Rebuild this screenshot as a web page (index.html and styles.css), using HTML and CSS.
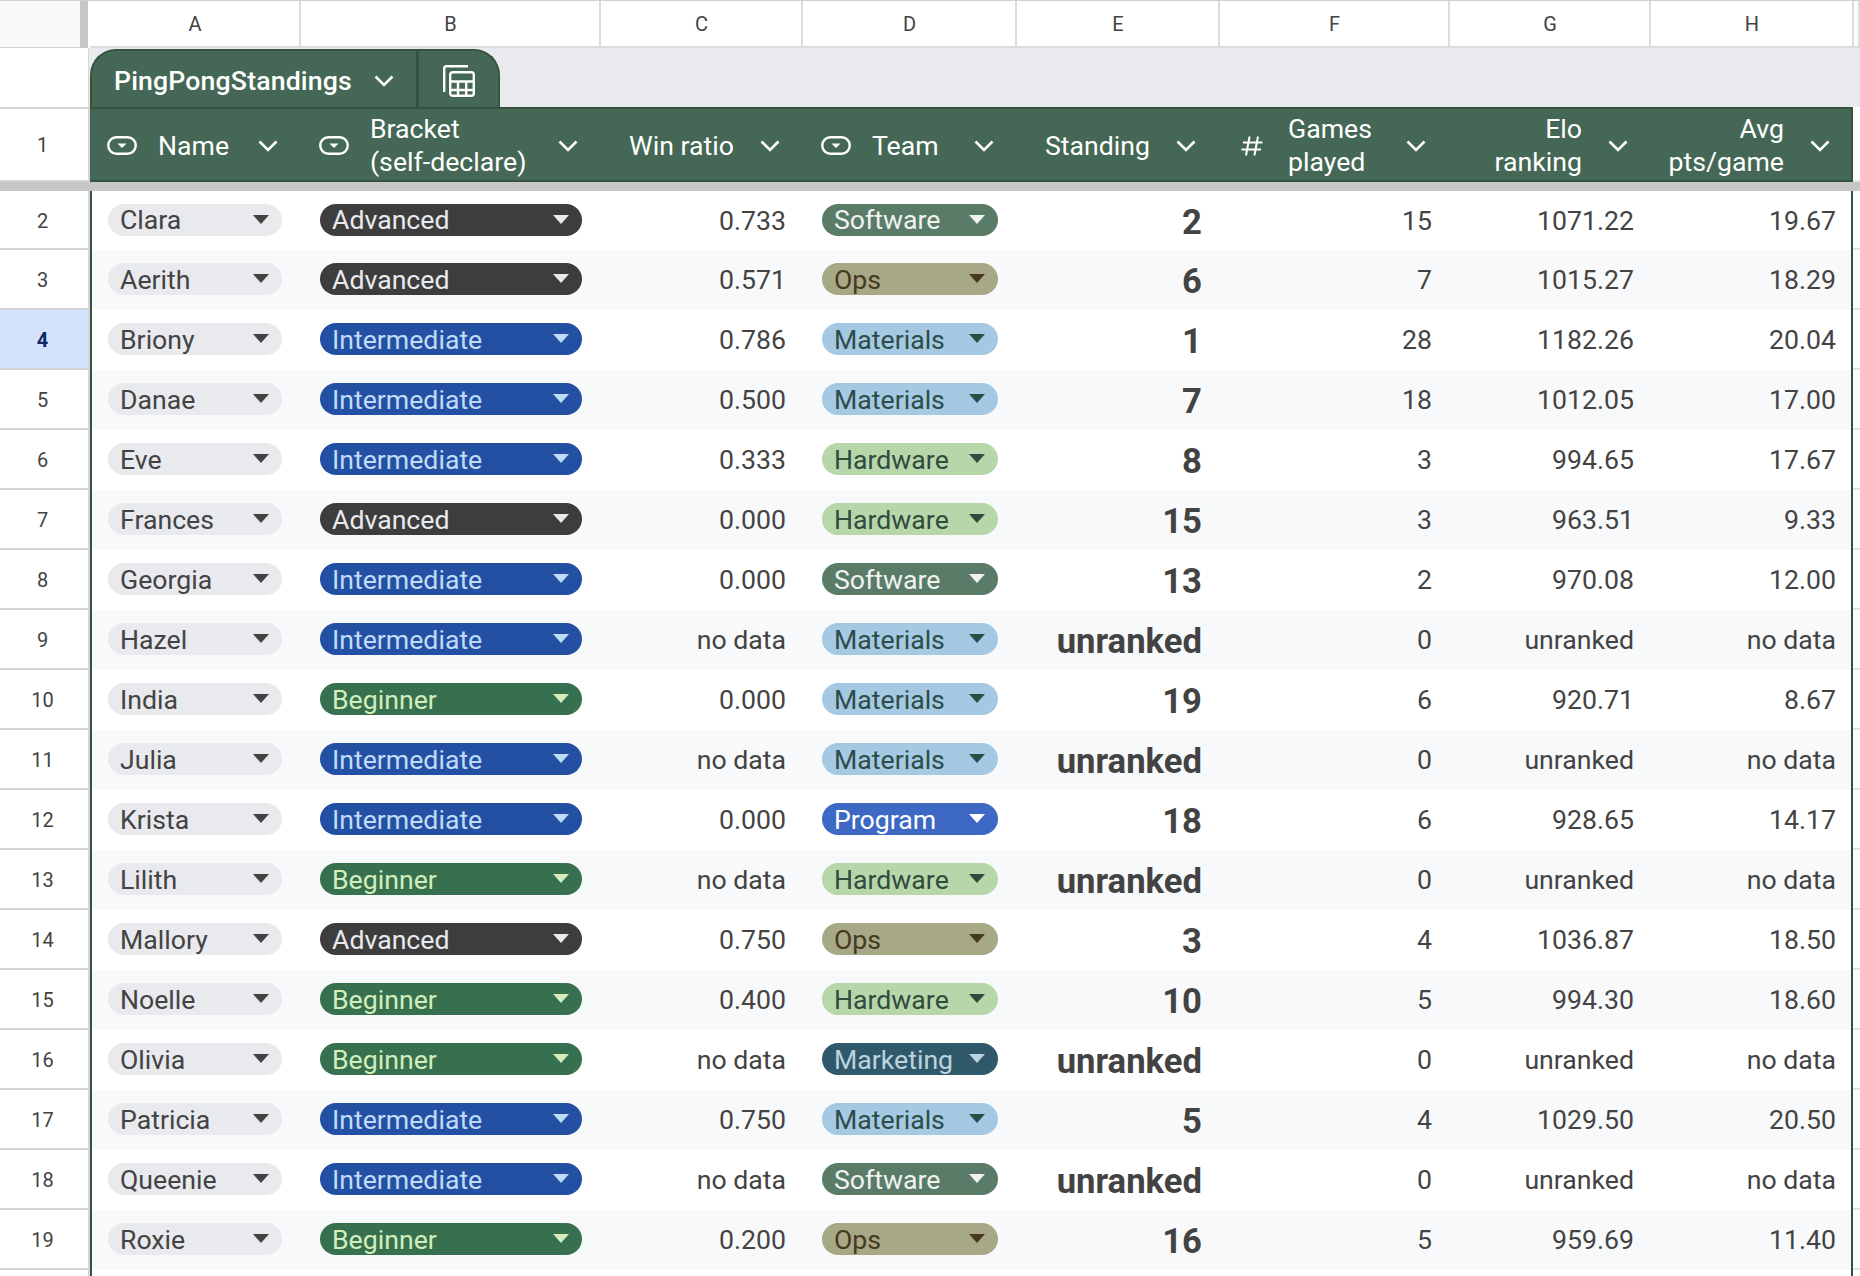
FILE: index.html
```html
<!DOCTYPE html>
<html lang="en">
<head>
    <meta charset="UTF-8">
    <title>PingPongStandings</title>
    <link rel="stylesheet" href="styles.css">
</head>
<body>
    <svg class="defs" width="0" height="0">
        <symbol id="chev" viewBox="0 0 20 12"><path d="M1.5 1.5 10 10l8.5-8.5" fill="none" stroke="currentColor" stroke-width="2.6"/></symbol>
        <symbol id="dropdown" viewBox="0 0 30 19"><rect x="1.3" y="1.3" width="27.4" height="16.4" rx="8" fill="none" stroke="currentColor" stroke-width="2.4"/><path d="M10.5 7.5h9l-4.5 4.6z" fill="currentColor"/></symbol>
    </svg>

    <div class="letters">
        <div class="corner"></div>
        <div class="letter">A</div>
        <div class="letter">B</div>
        <div class="letter">C</div>
        <div class="letter">D</div>
        <div class="letter">E</div>
        <div class="letter">F</div>
        <div class="letter">G</div>
        <div class="letter">H</div>
        <div class="letter"></div>
    </div>

    <div class="tab-row">
        <div class="gutter"></div>
        <div class="tab-strip">
            <div class="tab">
                <div class="tab-name">PingPongStandings<svg class="chev"><use href="#chev"/></svg></div>
                <div class="tab-views">
                    <svg class="calc" viewBox="0 0 32 32" fill="none" stroke="currentColor" stroke-width="2.4">
                        <path d="M25 1.2H3.5a2.3 2.3 0 0 0-2.3 2.3V27"/>
                        <rect x="7.2" y="7.2" width="23.6" height="23.6" rx="2.6"/>
                        <path d="M7 16.5h24M7 25h24M15 16.5V31M23.2 16.5V31"/>
                    </svg>
                </div>
            </div>
        </div>
    </div>

    <div class="head-row">
        <div class="gutter">1</div>
        <div class="head head-a"><svg class="dd"><use href="#dropdown"/></svg><span class="label">Name</span><svg class="chev"><use href="#chev"/></svg></div>
        <div class="head"><svg class="dd"><use href="#dropdown"/></svg><span class="label">Bracket<br>(self-declare)</span><svg class="chev"><use href="#chev"/></svg></div>
        <div class="head head-c"><span class="label">Win ratio</span><svg class="chev"><use href="#chev"/></svg></div>
        <div class="head"><svg class="dd"><use href="#dropdown"/></svg><span class="label">Team</span><svg class="chev"><use href="#chev"/></svg></div>
        <div class="head head-right head-e"><span class="label">Standing</span><svg class="chev"><use href="#chev"/></svg></div>
        <div class="head head-f">
            <svg class="hash" viewBox="0 0 22 20" fill="none" stroke="currentColor" stroke-width="2"><path d="M8.6 0.5 5 19.5M17 0.5 13.4 19.5M2 6.5h19.5M0.5 13.5H20"/></svg>
            <span class="label">Games<br>played</span><svg class="chev"><use href="#chev"/></svg>
        </div>
        <div class="head head-right"><span class="label">Elo<br>ranking</span><svg class="chev"><use href="#chev"/></svg></div>
        <div class="head head-right head-h"><span class="label">Avg<br>pts/game</span><svg class="chev"><use href="#chev"/></svg></div>
        <div class="spare"></div>
    </div>

    <div class="freeze"></div>

    <div class="rows">
        <div class="row">
            <div class="gutter">2</div>
            <div class="cell cell-a"><span class="chip chip-name">Clara<i class="caret"></i></span></div>
            <div class="cell"><span class="chip chip-bracket advanced">Advanced<i class="caret"></i></span></div>
            <div class="cell num">0.733</div>
            <div class="cell"><span class="chip chip-team software">Software<i class="caret"></i></span></div>
            <div class="cell num rank">2</div>
            <div class="cell num">15</div>
            <div class="cell num">1071.22</div>
            <div class="cell num cell-h">19.67</div>
            <div class="spare"></div>
        </div>
        <div class="row">
            <div class="gutter">3</div>
            <div class="cell cell-a"><span class="chip chip-name">Aerith<i class="caret"></i></span></div>
            <div class="cell"><span class="chip chip-bracket advanced">Advanced<i class="caret"></i></span></div>
            <div class="cell num">0.571</div>
            <div class="cell"><span class="chip chip-team ops">Ops<i class="caret"></i></span></div>
            <div class="cell num rank">6</div>
            <div class="cell num">7</div>
            <div class="cell num">1015.27</div>
            <div class="cell num cell-h">18.29</div>
            <div class="spare"></div>
        </div>
        <div class="row">
            <div class="gutter gutter-active">4</div>
            <div class="cell cell-a"><span class="chip chip-name">Briony<i class="caret"></i></span></div>
            <div class="cell"><span class="chip chip-bracket intermediate">Intermediate<i class="caret"></i></span></div>
            <div class="cell num">0.786</div>
            <div class="cell"><span class="chip chip-team materials">Materials<i class="caret"></i></span></div>
            <div class="cell num rank">1</div>
            <div class="cell num">28</div>
            <div class="cell num">1182.26</div>
            <div class="cell num cell-h">20.04</div>
            <div class="spare"></div>
        </div>
        <div class="row">
            <div class="gutter">5</div>
            <div class="cell cell-a"><span class="chip chip-name">Danae<i class="caret"></i></span></div>
            <div class="cell"><span class="chip chip-bracket intermediate">Intermediate<i class="caret"></i></span></div>
            <div class="cell num">0.500</div>
            <div class="cell"><span class="chip chip-team materials">Materials<i class="caret"></i></span></div>
            <div class="cell num rank">7</div>
            <div class="cell num">18</div>
            <div class="cell num">1012.05</div>
            <div class="cell num cell-h">17.00</div>
            <div class="spare"></div>
        </div>
        <div class="row">
            <div class="gutter">6</div>
            <div class="cell cell-a"><span class="chip chip-name">Eve<i class="caret"></i></span></div>
            <div class="cell"><span class="chip chip-bracket intermediate">Intermediate<i class="caret"></i></span></div>
            <div class="cell num">0.333</div>
            <div class="cell"><span class="chip chip-team hardware">Hardware<i class="caret"></i></span></div>
            <div class="cell num rank">8</div>
            <div class="cell num">3</div>
            <div class="cell num">994.65</div>
            <div class="cell num cell-h">17.67</div>
            <div class="spare"></div>
        </div>
        <div class="row">
            <div class="gutter">7</div>
            <div class="cell cell-a"><span class="chip chip-name">Frances<i class="caret"></i></span></div>
            <div class="cell"><span class="chip chip-bracket advanced">Advanced<i class="caret"></i></span></div>
            <div class="cell num">0.000</div>
            <div class="cell"><span class="chip chip-team hardware">Hardware<i class="caret"></i></span></div>
            <div class="cell num rank">15</div>
            <div class="cell num">3</div>
            <div class="cell num">963.51</div>
            <div class="cell num cell-h">9.33</div>
            <div class="spare"></div>
        </div>
        <div class="row">
            <div class="gutter">8</div>
            <div class="cell cell-a"><span class="chip chip-name">Georgia<i class="caret"></i></span></div>
            <div class="cell"><span class="chip chip-bracket intermediate">Intermediate<i class="caret"></i></span></div>
            <div class="cell num">0.000</div>
            <div class="cell"><span class="chip chip-team software">Software<i class="caret"></i></span></div>
            <div class="cell num rank">13</div>
            <div class="cell num">2</div>
            <div class="cell num">970.08</div>
            <div class="cell num cell-h">12.00</div>
            <div class="spare"></div>
        </div>
        <div class="row">
            <div class="gutter">9</div>
            <div class="cell cell-a"><span class="chip chip-name">Hazel<i class="caret"></i></span></div>
            <div class="cell"><span class="chip chip-bracket intermediate">Intermediate<i class="caret"></i></span></div>
            <div class="cell num">no data</div>
            <div class="cell"><span class="chip chip-team materials">Materials<i class="caret"></i></span></div>
            <div class="cell num rank">unranked</div>
            <div class="cell num">0</div>
            <div class="cell num">unranked</div>
            <div class="cell num cell-h">no data</div>
            <div class="spare"></div>
        </div>
        <div class="row">
            <div class="gutter">10</div>
            <div class="cell cell-a"><span class="chip chip-name">India<i class="caret"></i></span></div>
            <div class="cell"><span class="chip chip-bracket beginner">Beginner<i class="caret"></i></span></div>
            <div class="cell num">0.000</div>
            <div class="cell"><span class="chip chip-team materials">Materials<i class="caret"></i></span></div>
            <div class="cell num rank">19</div>
            <div class="cell num">6</div>
            <div class="cell num">920.71</div>
            <div class="cell num cell-h">8.67</div>
            <div class="spare"></div>
        </div>
        <div class="row">
            <div class="gutter">11</div>
            <div class="cell cell-a"><span class="chip chip-name">Julia<i class="caret"></i></span></div>
            <div class="cell"><span class="chip chip-bracket intermediate">Intermediate<i class="caret"></i></span></div>
            <div class="cell num">no data</div>
            <div class="cell"><span class="chip chip-team materials">Materials<i class="caret"></i></span></div>
            <div class="cell num rank">unranked</div>
            <div class="cell num">0</div>
            <div class="cell num">unranked</div>
            <div class="cell num cell-h">no data</div>
            <div class="spare"></div>
        </div>
        <div class="row">
            <div class="gutter">12</div>
            <div class="cell cell-a"><span class="chip chip-name">Krista<i class="caret"></i></span></div>
            <div class="cell"><span class="chip chip-bracket intermediate">Intermediate<i class="caret"></i></span></div>
            <div class="cell num">0.000</div>
            <div class="cell"><span class="chip chip-team program">Program<i class="caret"></i></span></div>
            <div class="cell num rank">18</div>
            <div class="cell num">6</div>
            <div class="cell num">928.65</div>
            <div class="cell num cell-h">14.17</div>
            <div class="spare"></div>
        </div>
        <div class="row">
            <div class="gutter">13</div>
            <div class="cell cell-a"><span class="chip chip-name">Lilith<i class="caret"></i></span></div>
            <div class="cell"><span class="chip chip-bracket beginner">Beginner<i class="caret"></i></span></div>
            <div class="cell num">no data</div>
            <div class="cell"><span class="chip chip-team hardware">Hardware<i class="caret"></i></span></div>
            <div class="cell num rank">unranked</div>
            <div class="cell num">0</div>
            <div class="cell num">unranked</div>
            <div class="cell num cell-h">no data</div>
            <div class="spare"></div>
        </div>
        <div class="row">
            <div class="gutter">14</div>
            <div class="cell cell-a"><span class="chip chip-name">Mallory<i class="caret"></i></span></div>
            <div class="cell"><span class="chip chip-bracket advanced">Advanced<i class="caret"></i></span></div>
            <div class="cell num">0.750</div>
            <div class="cell"><span class="chip chip-team ops">Ops<i class="caret"></i></span></div>
            <div class="cell num rank">3</div>
            <div class="cell num">4</div>
            <div class="cell num">1036.87</div>
            <div class="cell num cell-h">18.50</div>
            <div class="spare"></div>
        </div>
        <div class="row">
            <div class="gutter">15</div>
            <div class="cell cell-a"><span class="chip chip-name">Noelle<i class="caret"></i></span></div>
            <div class="cell"><span class="chip chip-bracket beginner">Beginner<i class="caret"></i></span></div>
            <div class="cell num">0.400</div>
            <div class="cell"><span class="chip chip-team hardware">Hardware<i class="caret"></i></span></div>
            <div class="cell num rank">10</div>
            <div class="cell num">5</div>
            <div class="cell num">994.30</div>
            <div class="cell num cell-h">18.60</div>
            <div class="spare"></div>
        </div>
        <div class="row">
            <div class="gutter">16</div>
            <div class="cell cell-a"><span class="chip chip-name">Olivia<i class="caret"></i></span></div>
            <div class="cell"><span class="chip chip-bracket beginner">Beginner<i class="caret"></i></span></div>
            <div class="cell num">no data</div>
            <div class="cell"><span class="chip chip-team marketing">Marketing<i class="caret"></i></span></div>
            <div class="cell num rank">unranked</div>
            <div class="cell num">0</div>
            <div class="cell num">unranked</div>
            <div class="cell num cell-h">no data</div>
            <div class="spare"></div>
        </div>
        <div class="row">
            <div class="gutter">17</div>
            <div class="cell cell-a"><span class="chip chip-name">Patricia<i class="caret"></i></span></div>
            <div class="cell"><span class="chip chip-bracket intermediate">Intermediate<i class="caret"></i></span></div>
            <div class="cell num">0.750</div>
            <div class="cell"><span class="chip chip-team materials">Materials<i class="caret"></i></span></div>
            <div class="cell num rank">5</div>
            <div class="cell num">4</div>
            <div class="cell num">1029.50</div>
            <div class="cell num cell-h">20.50</div>
            <div class="spare"></div>
        </div>
        <div class="row">
            <div class="gutter">18</div>
            <div class="cell cell-a"><span class="chip chip-name">Queenie<i class="caret"></i></span></div>
            <div class="cell"><span class="chip chip-bracket intermediate">Intermediate<i class="caret"></i></span></div>
            <div class="cell num">no data</div>
            <div class="cell"><span class="chip chip-team software">Software<i class="caret"></i></span></div>
            <div class="cell num rank">unranked</div>
            <div class="cell num">0</div>
            <div class="cell num">unranked</div>
            <div class="cell num cell-h">no data</div>
            <div class="spare"></div>
        </div>
        <div class="row">
            <div class="gutter">19</div>
            <div class="cell cell-a"><span class="chip chip-name">Roxie<i class="caret"></i></span></div>
            <div class="cell"><span class="chip chip-bracket beginner">Beginner<i class="caret"></i></span></div>
            <div class="cell num">0.200</div>
            <div class="cell"><span class="chip chip-team ops">Ops<i class="caret"></i></span></div>
            <div class="cell num rank">16</div>
            <div class="cell num">5</div>
            <div class="cell num">959.69</div>
            <div class="cell num cell-h">11.40</div>
            <div class="spare"></div>
        </div>
        <div class="row">
            <div class="gutter"></div>
            <div class="cell cell-a"></div>
            <div class="cell"></div>
            <div class="cell"></div>
            <div class="cell"></div>
            <div class="cell"></div>
            <div class="cell"></div>
            <div class="cell"></div>
            <div class="cell cell-h"></div>
            <div class="spare"></div>
        </div>
    </div>
</body>
</html>
```

FILE: styles.css
```css
html, body {
    margin: 0;
    padding: 0;
    height: 1276px;
    overflow: hidden;
}
body {
    font-family: Roboto, "Liberation Sans", sans-serif;
    font-size: 26.67px;
    color: #434343;
    background-color: white;
}
.defs {
    display: block;
    height: 0;
}
.head-row, .row {
    display: grid;
    grid-template-columns: 90px 210px 300px 202px 214px 203px 230px 201px 203px 7px;
}

/* column letters */
.letters {
    display: grid;
    grid-template-columns: 90px 211px 300px 202px 214px 203px 230px 201px 203px 6px;
    height: 48px;
    border-top: 1px solid #d0d0d0;
    box-sizing: border-box;
}
.corner {
    background-color: #f8f9fa;
    border-right: 8px solid #c7c7c7;
    margin-right: 2px;
    border-bottom: 1px solid #d0d0d0;
}
.letter {
    display: flex;
    align-items: center;
    justify-content: center;
    box-sizing: border-box;
    padding-left: 1px;
    font-size: 20px;
    border-right: 2px solid #dcdcdc;
    border-bottom: 2px solid #dcdcdc;
}

/* row numbers */
.gutter {
    display: flex;
    align-items: center;
    justify-content: center;
    box-sizing: border-box;
    font-size: 20px;
    padding-top: 2px;
    padding-right: 3px;
    background-color: white;
    border-right: 2px solid #d4d4d4;
    border-bottom: 2px solid #d4d4d4;
}
.gutter-active {
    background-color: #d3e3fd;
    color: #0b2a66;
    font-weight: bold;
}
.tab-row .gutter {
    border-bottom: 0;
}
.head-row .gutter {
    padding-top: 0;
    border-top: 2px solid #d4d4d4;
}

/* table tab */
.tab-row {
    display: grid;
    grid-template-columns: 90px 1fr;
    height: 59px;
}
.tab-strip {
    display: flex;
    align-items: flex-end;
    background-color: #e8eaed;
    margin-left: -1px;
    padding-left: 1px;
}
.tab {
    display: flex;
    width: 410px;
    height: 58px;
    box-sizing: border-box;
    background-color: #446855;
    color: white;
    border-top: 2px solid #36533f;
    border-left: 2px solid #36533f;
    border-right: 2px solid #36533f;
    border-radius: 26px 26px 0 0;
}
.tab-name {
    display: flex;
    align-items: center;
    width: 327px;
    box-sizing: border-box;
    padding-top: 4px;
    padding-left: 22px;
    padding-right: 22px;
    font-weight: 500;
    letter-spacing: 0.15px;
    border-right: 3px solid #36533f;
    white-space: nowrap;
}
.tab-name .chev {
    margin-left: auto;
}
.tab-views {
    flex: 1;
    display: flex;
    align-items: center;
    padding-top: 4px;
    padding-left: 24px;
}
.calc {
    width: 32px;
    height: 32px;
}

/* header row */
.head-row {
    height: 75px;
}
.head {
    display: flex;
    align-items: center;
    box-sizing: border-box;
    padding-left: 20px;
    padding-right: 22px;
    padding-top: 3px;
    background-color: #446855;
    color: white;
    line-height: 33px;
    border-top: 2px solid #36533f;
    border-bottom: 2px solid #36533f;
}
.head-a {
    padding-left: 18px;
}
.head-c {
    padding-left: 29px;
}
.head-right {
    justify-content: flex-end;
    text-align: right;
}
.head-e {
    padding-right: 23px;
}
.head-f {
    padding-left: 22px;
    padding-right: 23px;
}
.head-h {
    padding-right: 21px;
    border-right: 2px solid #36533f;
}
.dd {
    width: 30px;
    height: 19px;
    flex-shrink: 0;
    margin-left: -1px;
    margin-right: 21px;
    margin-bottom: 2px;
}
.hash {
    width: 22px;
    height: 20px;
    flex-shrink: 0;
    margin-right: 25px;
}
.chev {
    width: 20px;
    height: 12px;
    flex-shrink: 0;
    color: white;
}
.head .chev {
    margin-left: auto;
}
.head-right .chev {
    margin-left: 26px;
}

/* frozen row divider */
.freeze {
    height: 9px;
    background-color: #c7c7c7;
}

/* data rows */
.row {
    height: 60px;
}
.row:first-child {
    height: 59px;
}
.row:nth-child(even) .cell {
    background-color: #f8f9fa;
}
.cell {
    display: flex;
    align-items: center;
    box-sizing: border-box;
    padding-left: 20px;
    padding-bottom: 2px;
    white-space: nowrap;
}
.cell-a {
    padding-left: 16px;
    border-left: 2px solid #36533f;
}
.cell-h {
    border-right: 2px solid #36533f;
}
.num {
    justify-content: flex-end;
    padding-right: 16px;
    padding-bottom: 0;
}
.cell-h.num {
    padding-right: 15px;
}
.row .cell:nth-child(7) {
    padding-right: 17px;
}
.rank {
    padding-top: 2px;
    padding-right: 17px;
    font-size: 34.67px;
    font-weight: bold;
}
.spare {
    border-bottom: 2px solid #e4e4e4;
}

/* dropdown chips */
.chip {
    display: flex;
    align-items: center;
    justify-content: space-between;
    box-sizing: border-box;
    height: 32px;
    padding-top: 1px;
    padding-left: 12px;
    padding-right: 13px;
    border-radius: 16px;
    line-height: 32px;
}
.caret {
    width: 0;
    height: 0;
    border-left: 8.5px solid transparent;
    border-right: 8.5px solid transparent;
    border-top: 9px solid currentColor;
    margin-bottom: 2px;
}
.chip-name {
    width: 174px;
    background-color: #e8eaed;
}
.chip-bracket {
    width: 262px;
}
.chip-team {
    width: 176px;
}
.advanced {
    background-color: #3d3d3d;
    color: #e8eaed;
}
.intermediate {
    background-color: #2450a3;
    color: #bfdcf6;
}
.beginner {
    background-color: #37704f;
    color: #d4edbc;
}
.software {
    background-color: #5b7b69;
    color: #eef3f0;
}
.ops {
    background-color: #a6a886;
    color: #473821;
}
.materials {
    background-color: #a6c9e3;
    color: #2c4d48;
}
.hardware {
    background-color: #b7d6a9;
    color: #2f4c3e;
}
.program {
    background-color: #3d69c4;
    color: white;
}
.marketing {
    background-color: #2f596b;
    color: #bcd3dd;
}
```
